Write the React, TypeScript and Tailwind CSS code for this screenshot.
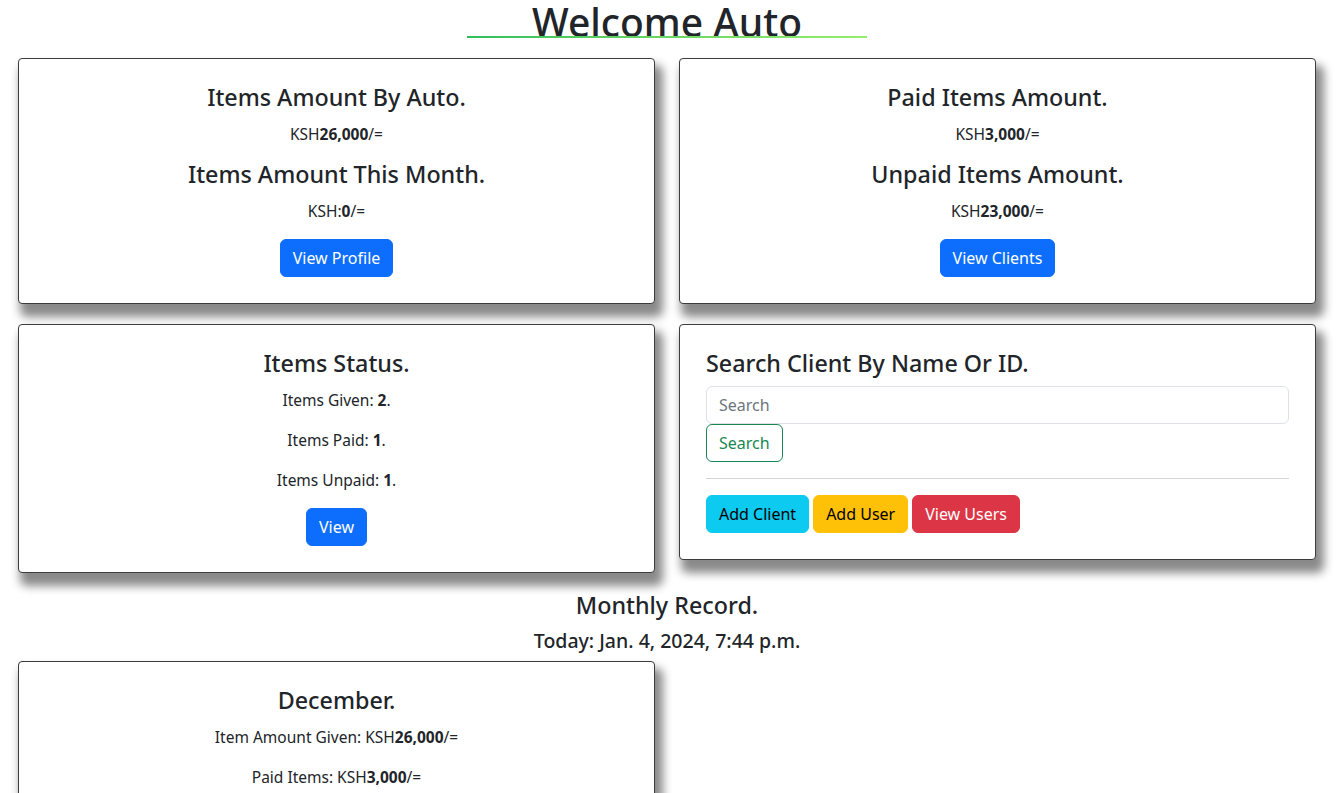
import React from "react";

const font = { fontFamily: '"Noto Sans", "DejaVu Sans", sans-serif' };

function Card({ children, className = "" }: { children: React.ReactNode; className?: string }) {
  return (
    <div
      className={
        "bg-white border border-[#3c3c3c] rounded-[4px] shadow-[5px_10px_10px_3px_#8a8a8a] px-[26px] pt-6 pb-[26px] " +
        className
      }
    >
      {children}
    </div>
  );
}

function H4({ children, className = "" }: { children: React.ReactNode; className?: string }) {
  return <h4 className={"text-[23.3px] leading-[29px] font-medium mb-2 " + className}>{children}</h4>;
}

function P({ children }: { children: React.ReactNode }) {
  return <p className="pt-[2px] text-[15.5px] leading-6 mb-[14px]">{children}</p>;
}

function Btn({ children, className }: { children: React.ReactNode; className: string }) {
  return (
    <button className={"h-[38px] px-3 rounded-[6px] text-[16px] leading-6 border " + className}>{children}</button>
  );
}

export default function App() {
  return (
    <div className="min-h-screen bg-white text-[#212529] pl-[18px] pr-[21px]" style={font}>
      <div className="w-[400px] mx-auto relative h-[58px]">
        <h1 className="text-[39px] leading-[44px] font-medium text-center">Welcome Auto</h1>
        <div className="absolute left-0 right-0 top-[36px] h-[2px] bg-gradient-to-r from-[#2fbf5a] to-[#95ee6c]" />
      </div>

      <div className="grid grid-cols-2 gap-x-6 gap-y-5 items-start">
        <Card className="text-center">
          <H4>Items Amount By Auto.</H4>
          <P>
            KSH<b>26,000</b>/=
          </P>
          <H4>Items Amount This Month.</H4>
          <P>
            KSH:<b>0</b>/=
          </P>
          <Btn className="mt-[2px] bg-[#0d6efd] border-[#0d6efd] text-white">View Profile</Btn>
        </Card>
        <Card className="text-center">
          <H4>Paid Items Amount.</H4>
          <P>
            KSH<b>3,000</b>/=
          </P>
          <H4>Unpaid Items Amount.</H4>
          <P>
            KSH<b>23,000</b>/=
          </P>
          <Btn className="mt-[2px] bg-[#0d6efd] border-[#0d6efd] text-white">View Clients</Btn>
        </Card>

        <Card className="text-center">
          <H4>Items Status.</H4>
          <P>
            Items Given: <b>2</b>.
          </P>
          <P>
            Items Paid: <b>1</b>.
          </P>
          <P>
            Items Unpaid: <b>1</b>.
          </P>
          <Btn className="mt-[2px] bg-[#0d6efd] border-[#0d6efd] text-white">View</Btn>
        </Card>
        <Card>
          <H4>Search Client By Name Or ID.</H4>
          <input
            placeholder="Search"
            className="block w-full h-[38px] mt-[1px] px-3 border border-[#dee2e6] rounded-[6px] text-[16px] placeholder:text-[#6c757d] outline-none"
          />
          <Btn className="bg-white border-[#198754] text-[#198754]">Search</Btn>
          <hr className="my-4 border-t border-[#d3d4d5]" />
          <div className="flex gap-1">
            <Btn className="bg-[#0dcaf0] border-[#0dcaf0] text-black">Add Client</Btn>
            <Btn className="bg-[#ffc107] border-[#ffc107] text-black">Add User</Btn>
            <Btn className="bg-[#dc3545] border-[#dc3545] text-white">View Users</Btn>
          </div>
        </Card>
      </div>

      <div className="text-center mt-[18px]">
        <H4>Monthly Record.</H4>
        <h5 className="text-[19.5px] leading-6 font-medium mt-[9px] mb-2">Today: Jan. 4, 2024, 7:44 p.m.</h5>
      </div>

      <div className="grid grid-cols-2 gap-x-6 items-start pb-10">
        <Card className="text-center">
          <H4>December.</H4>
          <P>
            Item Amount Given: KSH<b>26,000</b>/=
          </P>
          <P>
            Paid Items: KSH<b>3,000</b>/=
          </P>
          <P>
            Unpaid Items: KSH<b>23,000</b>/=
          </P>
          <Btn className="mt-[2px] bg-[#0d6efd] border-[#0d6efd] text-white">View</Btn>
        </Card>
      </div>
    </div>
  );
}
